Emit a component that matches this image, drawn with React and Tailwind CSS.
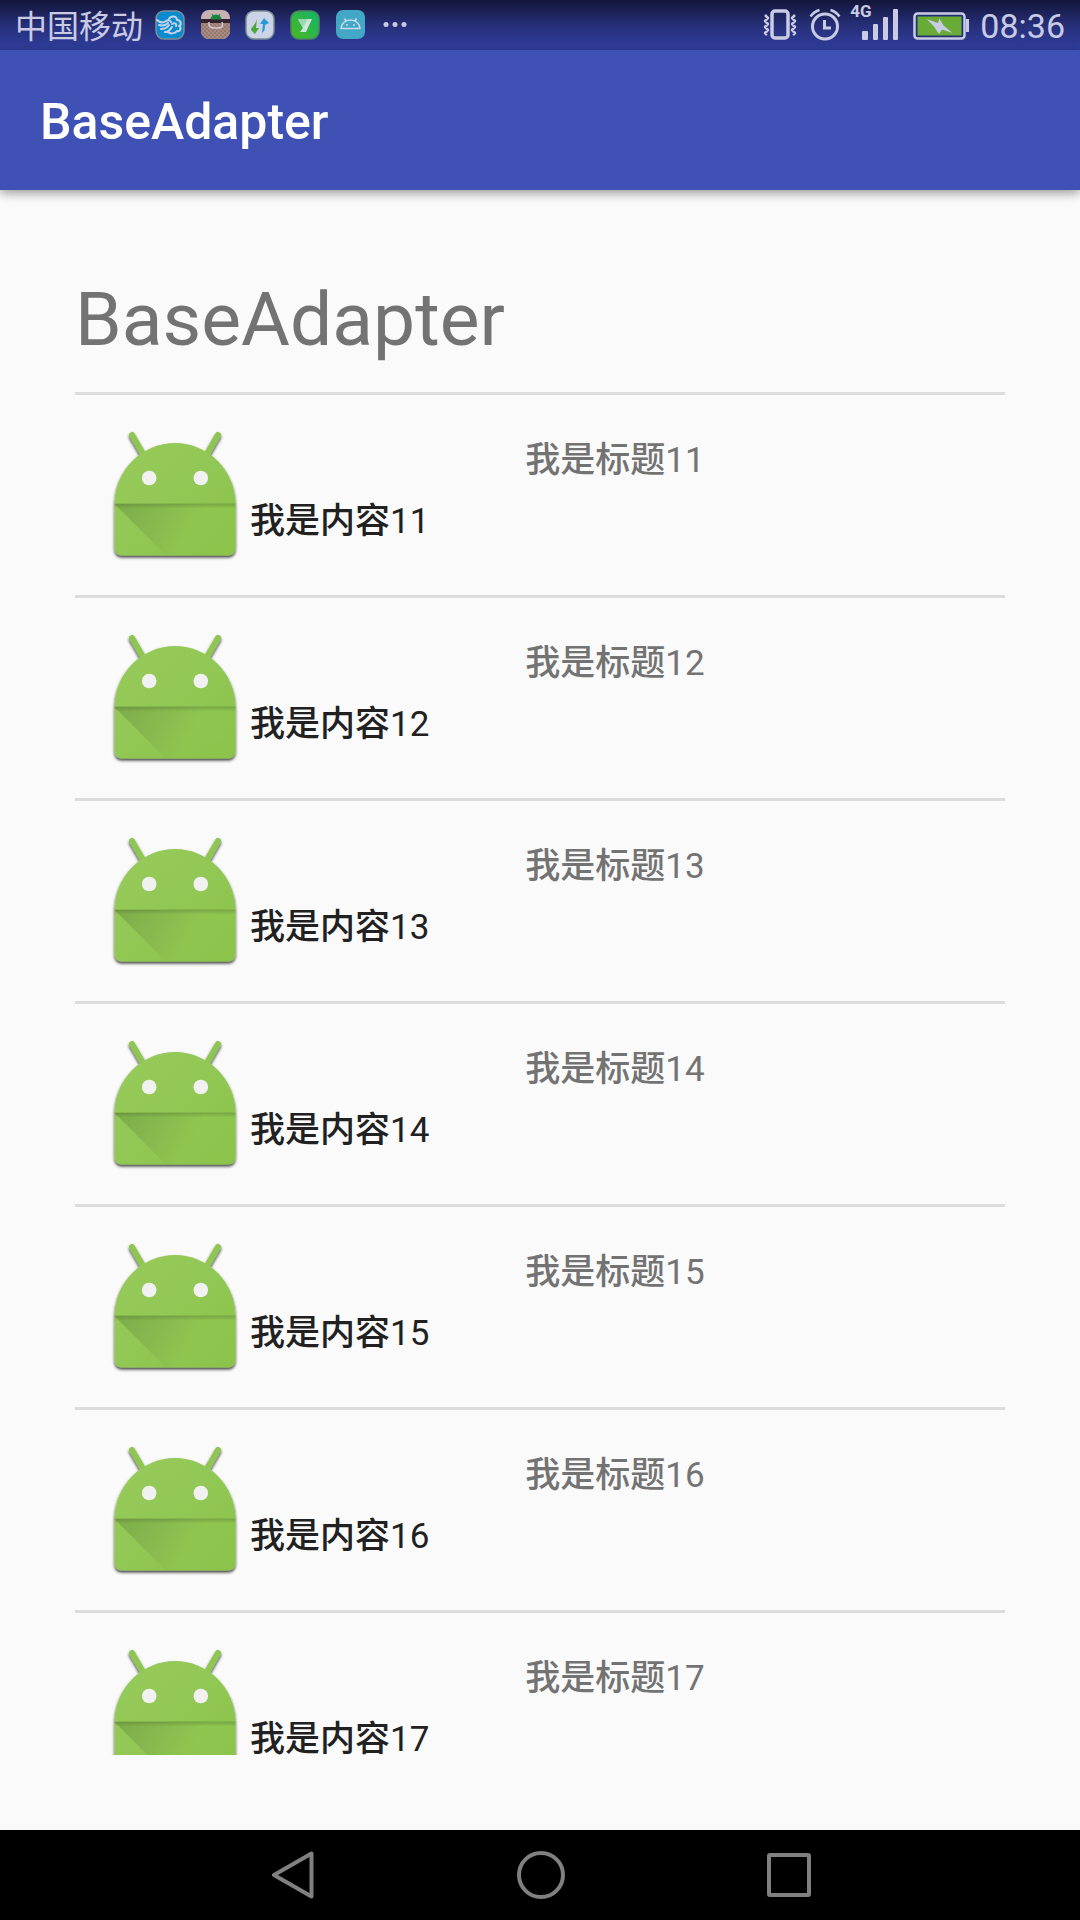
const rows = [11, 12, 13, 14, 15, 16, 17]

const AndroidIcon = () => (
  <svg viewBox="0 0 150 150" className="w-[150px] h-[150px] shrink-0" aria-hidden="true">
    <defs>
      <linearGradient id="skin" x1="0" y1="0" x2="1" y2="1">
        <stop offset="0" stopColor="#97cb5d" />
        <stop offset="1" stopColor="#8bc34a" />
      </linearGradient>
      <linearGradient id="cast" gradientUnits="userSpaceOnUse" x1="16" y1="84" x2="84" y2="124">
        <stop offset="0" stopColor="#4a6b2c" stopOpacity="0.32" />
        <stop offset="1" stopColor="#4a6b2c" stopOpacity="0" />
      </linearGradient>
      <linearGradient id="fold" x1="0" y1="0" x2="0" y2="1">
        <stop offset="0" stopColor="#47662b" stopOpacity="0.35" />
        <stop offset="1" stopColor="#47662b" stopOpacity="0" />
      </linearGradient>
      <filter id="drop" x="-10%" y="-10%" width="120%" height="125%">
        <feDropShadow dx="0" dy="2" stdDeviation="1.6" floodColor="#000" floodOpacity="0.75" />
      </filter>
    </defs>
    <g filter="url(#drop)">
      <path d="M32 15 43 34M118 15 107 34" stroke="#8fc653" strokeWidth="6" strokeLinecap="round" />
      <path
        d="M14.500 84a60.500 61 0 0 1 121 0v44.500a7 7 0 0 1-7 7h-107a7 7 0 0 1-7-7z"
        fill="url(#skin)"
      />
    </g>
    <path d="M14.500 84H135.500V128.500a7 7 0 0 1-7 7H66z" fill="url(#cast)" />
    <rect x="14.500" y="83.500" width="121" height="5" fill="url(#fold)" />
    <circle cx="49.200" cy="58" r="7.300" fill="#f1f1f1" />
    <circle cx="100.800" cy="58" r="7.300" fill="#f1f1f1" />
  </svg>
)

const AppIcons = () => (
  <div className="flex items-center gap-[15px]">
    <svg viewBox="0 0 30 30" className="w-[30px] h-[30px]" aria-hidden="true">
      <rect x="1" y="1" width="28" height="28" rx="8" fill="#0a8bd0" stroke="#7d8f94" strokeWidth="1.500" />
      <g fill="none" stroke="#c5d3ea" strokeWidth="2" strokeLinecap="round" strokeLinejoin="round">
        <path d="M2 10c3 3 6 3 9 1 2-1 4-1 5 1M4 15c3 1 6 1 9-2M6 19c4 0 6-1 8-4M10 22c4 1 5-3 7-5" />
        <path d="M14 9c2-4 8-3 8 1 4 0 5 5 2 6 3 2 1 6-2 5-2 3-7 3-9 1M17 14c3-2 5 0 4 2" />
      </g>
    </svg>
    <svg viewBox="0 0 30 30" className="w-[30px] h-[30px]" aria-hidden="true">
      <defs>
        <clipPath id="bagClip">
          <rect x="1" y="0" width="29" height="29" rx="8" />
        </clipPath>
        <pattern id="weave" width="4" height="4" patternUnits="userSpaceOnUse">
          <rect width="4" height="4" fill="#a88c80" />
          <path d="M0 1h2M2 3h2" stroke="#85656a" strokeWidth="1" />
        </pattern>
      </defs>
      <g clipPath="url(#bagClip)">
        <rect width="30" height="30" fill="#c9b2b4" />
        <rect y="9" width="30" height="4" fill="#35212f" />
        <rect y="13" width="30" height="17" fill="url(#weave)" />
        <path d="M11 9a5 4 0 0 1 10 0zM12 4l1 2M20 4l-1 2" fill="#16883e" stroke="#16883e" />
        <path d="M9 12c-1 6 3 6 7 6s8 0 6-6" fill="none" stroke="#d5c5c3" strokeWidth="1.500" />
      </g>
    </svg>
    <svg viewBox="0 0 30 30" className="w-[30px] h-[30px]" aria-hidden="true">
      <rect x="1" y="1" width="28" height="28" rx="8" fill="#cdd3e6" stroke="#7b8c94" strokeWidth="1.500" />
      <path d="M12 9l-1 9h3l-4 6-4-4c0-3 4-4 6-11z" fill="#49a83c" />
      <path d="M17 23l1-9h-3l4-6 5 5-4 2c0 3 0 6-3 8z" fill="#249bd4" />
    </svg>
    <svg viewBox="0 0 30 30" className="w-[30px] h-[30px]" aria-hidden="true">
      <defs>
        <linearGradient id="leaf" x1="0" y1="1" x2="1" y2="0">
          <stop offset="0" stopColor="#4cb81f" />
          <stop offset="1" stopColor="#0fb56c" />
        </linearGradient>
      </defs>
      <rect x="1" y="1" width="28" height="28" rx="8" fill="url(#leaf)" stroke="#4d8660" strokeWidth="1.500" />
      <path d="M8 9h14l-6 13h-6l3-4z" fill="#cfe4dc" />
      <path d="M8 9h10l-4 7h-2z" fill="#9fd6b4" />
    </svg>
    <svg viewBox="0 0 30 30" className="w-[30px] h-[30px]" aria-hidden="true">
      <rect x="1" width="29" height="29" rx="7" fill="#43a8c6" />
      <path d="M6 18.500a9.500 8.500 0 0 1 19 0zM11 11 9.500 8.500M20 11 21.500 8.500" fill="none" stroke="#c8dcea" strokeWidth="1.500" strokeLinejoin="round" />
      <circle cx="12" cy="15" r="1" fill="#c8dcea" />
      <circle cx="19" cy="15" r="1" fill="#c8dcea" />
    </svg>
    <svg viewBox="0 0 30 30" className="w-[30px] h-[30px]" fill="#c9cbe5" aria-hidden="true">
      <circle cx="6" cy="14.500" r="2.500" />
      <circle cx="15" cy="14.500" r="2.500" />
      <circle cx="24" cy="14.500" r="2.500" />
    </svg>
  </div>
)

const StatusBar = () => (
  <div className="flex items-center justify-between h-[50px] shrink-0 px-[15px] bg-linear-to-b from-[#12163a] via-[#272f78] to-[#303f9f] text-[#c9cbe5]">
    <div className="flex items-center gap-3">
      <span className="pt-[3px] text-[32px] leading-[50px]">中国移动</span>
      <AppIcons />
    </div>

    <div className="flex items-center gap-[11px]">
      <svg viewBox="0 0 36 36" className="w-9 h-9" fill="none" stroke="currentColor" aria-hidden="true">
        <rect x="10" y="4" width="16" height="27" rx="3" strokeWidth="3.500" />
        <path d="M3 8l3 3-3 3 3 3-3 3 3 3-3 3 2 2M33 8l-3 3 3 3-3 3 3 3-3 3 3 3-2 2" strokeWidth="2.500" strokeLinejoin="round" />
      </svg>
      <svg viewBox="0 0 32 36" className="w-8 h-9" fill="none" stroke="currentColor" aria-hidden="true">
        <circle cx="16" cy="19.500" r="12.500" strokeWidth="3" />
        <path d="M15.500 13v8H22" strokeWidth="3" />
        <path d="M1.500 9.500C4 6 7 4 10.500 3M30.500 9.500C28 6 25 4 21.500 3" strokeWidth="2.500" />
      </svg>
      <div className="relative w-12 h-9">
        <span className="absolute -left-0.5 -top-1 text-[17px] leading-4 font-bold">4G</span>
        <svg viewBox="0 0 48 36" className="w-12 h-9" fill="currentColor" aria-hidden="true">
          <rect x="10" y="24" width="6" height="9" rx="1" />
          <rect x="21" y="17" width="5" height="16" rx="1" />
          <rect x="31" y="10" width="5" height="23" rx="1" />
          <rect x="41" y="2" width="5" height="31" rx="1" />
        </svg>
      </div>
      <svg viewBox="0 0 58 30" className="w-[58px] h-[30px]" aria-hidden="true">
        <rect x="3.500" y="3.500" width="50" height="25" rx="3" fill="#23306f" stroke="#c9cbe5" strokeWidth="2.500" />
        <rect x="6.500" y="6.500" width="44" height="19" fill="#68ab36" />
        <path d="M55 9h3v13h-3z" fill="#c9cbe5" />
        <path d="M15.500 9 27 13l1.500-4.500 4 7L41.500 23 31 19.500 28 24l-5.500-8z" fill="#c9cbe5" />
      </svg>
      <span className="pt-[2px] text-[34px] leading-[50px]">08:36</span>
    </div>
  </div>
)

const ListItem = ({ id }) => (
  <li className="flex p-[25px] border-t-[3px] border-[#dcdcdc]">
    <AndroidIcon />
    <div className="flex-1 pt-2.5 text-[35px] leading-[61px]">
      <h3 className="text-center text-[#737373]">
        <span className="font-medium">我是标题</span>
        <span>{id}</span>
      </h3>
      <p className="text-[#212121]">
        <span className="font-medium">我是内容</span>
        <span>{id}</span>
      </p>
    </div>
  </li>
)

const NavBar = () => (
  <nav className="flex items-center justify-center h-[90px] shrink-0 bg-black text-[#808080]">
    <button aria-label="Back" className="flex justify-center w-[248px]">
      <svg viewBox="0 0 48 48" className="w-12 h-12" fill="none" stroke="currentColor" strokeWidth="4" strokeLinejoin="round">
        <path d="M6 24 43.500 2.500v43z" />
      </svg>
    </button>
    <button aria-label="Home" className="flex justify-center w-[248px]">
      <svg viewBox="0 0 48 48" className="w-12 h-12 overflow-visible" fill="none" stroke="currentColor" strokeWidth="4">
        <circle cx="25" cy="24" r="22" />
      </svg>
    </button>
    <button aria-label="Recent apps" className="flex justify-center w-[248px]">
      <svg viewBox="0 0 48 48" className="w-12 h-12" fill="none" stroke="currentColor" strokeWidth="4" strokeLinejoin="round">
        <rect x="5" y="4" width="40" height="40" rx="1" />
      </svg>
    </button>
  </nav>
)

export default function App() {
  return (
    <div className="flex flex-col h-screen bg-[#fafafa] font-[Roboto,'Noto_Sans_CJK_SC',sans-serif]" lang="zh-CN">
      <StatusBar />
      <header className="flex items-center h-[140px] shrink-0 px-10 pt-1 bg-[#3f51b5] shadow-[0_3px_10px_rgba(0,0,0,0.4)]">
        <h1 className="text-[50px] leading-[60px] font-medium text-white">BaseAdapter</h1>
      </header>

      <main className="flex flex-col flex-1 min-h-0 p-[75px]">
        <h2 className="shrink-0 pb-[18px] text-[75px] leading-[109px] text-[#737373]">BaseAdapter</h2>
        <ul className="flex-1 min-h-0 overflow-hidden">
          {rows.map((id) => (
            <ListItem key={id} id={id} />
          ))}
        </ul>
      </main>

      <NavBar />
    </div>
  )
}
